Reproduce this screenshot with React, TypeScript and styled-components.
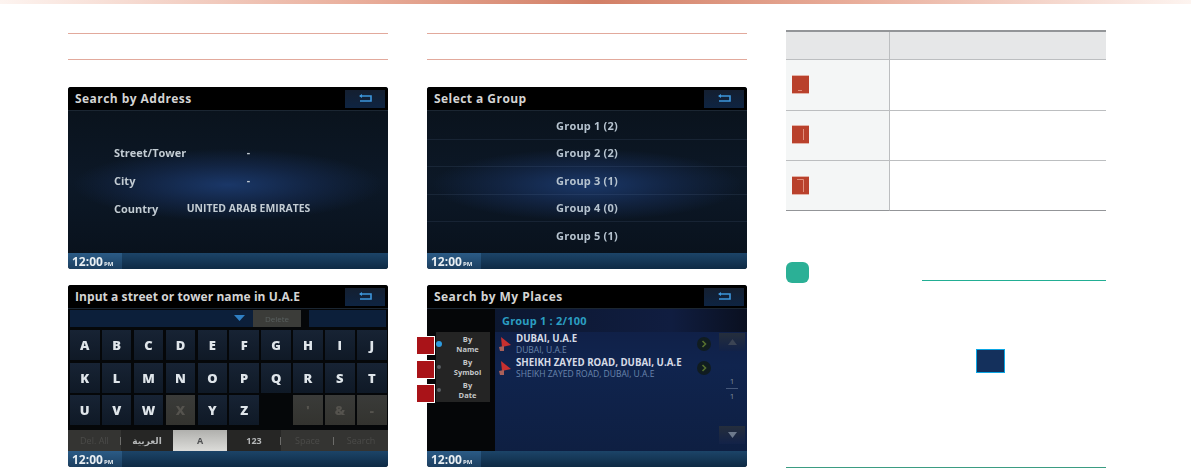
import React from 'react';
import styled, { createGlobalStyle } from 'styled-components';

const GlobalStyle = createGlobalStyle`
  html, body {
    margin: 0;
    padding: 0;
    background: #fff;
    overflow: hidden;
  }
  body {
    font-family: "Open Sans", "Liberation Sans", "DejaVu Sans", sans-serif;
  }
`;

const Page = styled.div`
  width: 1191px;
  height: 468px;
  overflow: hidden;
  background: #fff;
`;

const TopBand = styled.div`
  height: 4px;
  background: linear-gradient(90deg, #fdf4f0 0%, #e9ae9b 30%, #d27f66 50%, #e9ae9b 72%, #fdf4f0 100%);
`;

const Columns = styled.div`
  display: grid;
  grid-template-columns: 320px 320px 320px;
  column-gap: 39px;
  padding: 26px 0 0 68px;
`;

const Column = styled.section`
  display: flex;
  flex-direction: column;
`;

const HeadingBand = styled.div`
  height: 25px;
  margin-top: 3px;
  border-top: 1px solid #e2a99c;
  border-bottom: 1px solid #e2a99c;
`;

const ScreenStack = styled.div`
  position: relative;
  display: flex;
  flex-direction: column;
  gap: 16px;
  margin-top: 27px;
`;

const Screen = styled.div`
  height: 182px;
  border-radius: 3px;
  overflow: hidden;
  display: flex;
  flex-direction: column;
  background: #0a1320;
  color: #d4d8dc;
`;

const ScreenContent = styled.div`
  display: flex;
  flex-direction: column;
  flex: 1;
  min-height: 0;
  filter: blur(0.5px);
`;

const TitleBar = styled.div`
  height: 23px;
  flex: none;
  display: flex;
  align-items: center;
  justify-content: space-between;
  padding: 0 3px 0 7px;
  background: #000;
  border-bottom: 1px solid #1b2632;
`;

const Title = styled.span<{ $tracking: number }>`
  font-size: 12px;
  font-weight: 700;
  letter-spacing: ${p => p.$tracking}px;
  color: #d4d4d4;
`;

const BackButton = styled.div`
  width: 40px;
  height: 18px;
  background: linear-gradient(180deg, #141f30, #0e2442);
  display: flex;
  align-items: center;
  justify-content: center;
`;

const StatusBar = styled.div`
  height: 16px;
  flex: none;
  background: linear-gradient(180deg, #1c4468, #0e2a44);
  display: flex;
  align-items: stretch;
`;

const Clock = styled.div`
  width: 54px;
  display: flex;
  align-items: baseline;
  padding: 0 0 0 4px;
  box-sizing: border-box;
  background: linear-gradient(180deg, #2b5b86, #1c3f60);
  font-size: 12px;
  font-weight: 700;
  color: #e8eef2;

  small {
    font-size: 6px;
    margin-left: 1px;
  }
`;

const GlowBody = styled.div`
  flex: 1;
  min-height: 0;
  background:
    radial-gradient(ellipse 155px 36px at 50% 52%, #1a3768 0%, rgba(22, 44, 84, 0.6) 55%, rgba(10, 22, 38, 0) 100%),
    linear-gradient(180deg, #0a131d 0%, #0c1827 50%, #09121d 100%);
`;

const AddressBody = styled(GlowBody)`
  display: grid;
  grid-template-columns: 72px 125px;
  grid-auto-rows: 28px;
  padding: 27px 0 0 46px;
  align-items: center;
  font-size: 11px;
  font-weight: 700;
  color: #c3ccd3;
`;

const AddressValue = styled.span`
  text-align: center;
  font-size: 10.4px;
  white-space: nowrap;
`;

const GroupBody = styled(GlowBody)`
  display: flex;
  flex-direction: column;
  padding-top: 1px;
`;

const GroupRow = styled.div`
  height: 27.5px;
  display: flex;
  align-items: center;
  justify-content: center;
  font-size: 11px;
  font-weight: 700;
  letter-spacing: 0.2px;
  color: #b6c3cf;
  border-bottom: 1px solid rgba(120, 150, 190, 0.12);
  box-sizing: border-box;
  &:last-child {
    border-bottom: 0;
  }
`;

const KeyboardBody = styled.div`
  flex: 1;
  min-height: 0;
  display: flex;
  flex-direction: column;
  background: #050709;
`;

const InputRow = styled.div`
  height: 17px;
  margin: 1px 2px 0;
  display: flex;
  align-items: stretch;
`;

const InputField = styled.div`
  width: 183px;
  background: #0c1f3a;
  display: flex;
  align-items: center;
  justify-content: flex-end;
  padding-right: 8px;
  box-sizing: border-box;
`;

const DeleteKey = styled.div`
  width: 48px;
  background: #3b3c39;
  color: #59605f;
  font-size: 8px;
  display: flex;
  align-items: center;
  justify-content: center;
`;

const InputTail = styled.div`
  flex: 1;
  margin-left: 8px;
  background: #0c1f3a;
`;

const KeyGrid = styled.div`
  display: grid;
  grid-template-columns: repeat(10, 29.5px);
  grid-auto-rows: 30px;
  column-gap: 2.4px;
  row-gap: 2.6px;
  margin: 3px 0 0 2px;
`;

const Key = styled.div<{ $state?: 'on' | 'off' | 'blank' }>`
  display: flex;
  align-items: center;
  justify-content: center;
  font-size: 13px;
  font-weight: 800;
  color: ${p => (p.$state === 'off' ? '#55534e' : '#dfe5ea')};
  background: ${p =>
    p.$state === 'off'
      ? 'linear-gradient(180deg, #3a3b39, #33332f)'
      : p.$state === 'blank'
        ? 'transparent'
        : 'linear-gradient(180deg, #172334, #0f1926)'};
`;

const ModeBar = styled.div`
  height: 21px;
  margin-top: 5px;
  display: grid;
  grid-template-columns: 53px 52px 54px 54px 53px 1fr;
`;

const ModeTab = styled.div<{ $on?: boolean; $dim?: boolean; $rule?: boolean }>`
  position: relative;
  display: flex;
  align-items: center;
  justify-content: center;
  font-size: 9px;
  font-weight: ${p => (p.$dim ? 400 : 700)};
  color: ${p => (p.$on ? '#4f5052' : p.$dim ? '#4b4b49' : '#b5b7b8')};
  background: ${p =>
    p.$on ? 'linear-gradient(180deg, #b0b0ad, #dcdcd9)' : p.$dim ? '#343432' : '#262625'};
  white-space: nowrap;

  &::after {
    content: '';
    display: ${p => (p.$rule ? 'block' : 'none')};
    position: absolute;
    right: 0;
    top: 7px;
    height: 8px;
    width: 1px;
    background: #6c6c6a;
  }
`;

const PlacesBody = styled.div`
  flex: 1;
  min-height: 0;
  display: grid;
  grid-template-columns: 68px 1fr;
  background: #050608;
`;

const SortColumn = styled.div`
  padding-top: 23px;
`;

const SortList = styled.div`
  margin-left: 9px;
  width: 54px;
  height: 70px;
  display: flex;
  flex-direction: column;
  background: #242424;
`;

const SortItem = styled.div`
  flex: 1;
  display: flex;
  align-items: center;
  gap: 3px;
  padding-left: 0;
`;

const Dot = styled.span<{ $on?: boolean }>`
  flex: none;
  width: 6px;
  height: 6px;
  display: flex;
  align-items: center;
  justify-content: center;
  border-radius: 50%;
  background: ${p => (p.$on ? '#2d9be0' : 'transparent')};

  &::before {
    content: '';
    width: 4px;
    height: 4px;
    border-radius: 50%;
    background: ${p => (p.$on ? '#2d9be0' : '#5a5f63')};
  }
`;

const SortLabel = styled.span`
  flex: 1;
  text-align: center;
  font-size: 7.5px;
  font-weight: 700;
  line-height: 10px;
  color: #c4c7c9;
`;

const PlacesPanel = styled.div`
  display: flex;
  flex-direction: column;
  background: linear-gradient(180deg, #101e44 0%, #10244e 40%, #0e1f42 100%);
`;

const GroupCaption = styled.div`
  height: 23px;
  flex: none;
  display: flex;
  align-items: center;
  padding-left: 7px;
  font-size: 11px;
  font-weight: 700;
  letter-spacing: 0.2px;
  color: #2b9ec2;
  background: linear-gradient(90deg, #0c1730, #101d40 70%, #0a1020);
`;

const PlacesMain = styled.div`
  flex: 1;
  min-height: 0;
  display: grid;
  grid-template-columns: 1fr 28px;
`;

const PlaceList = styled.div`
  display: flex;
  flex-direction: column;
`;

const PlaceRow = styled.div`
  height: 24px;
  display: grid;
  grid-template-columns: 17px 1fr 22px;
  align-items: center;
  padding-left: 4px;
`;

const PlaceName = styled.div`
  font-size: 9.7px;
  font-weight: 700;
  line-height: 11px;
  color: #d6dbe6;
  white-space: nowrap;
`;

const PlaceSub = styled.div`
  font-size: 8.5px;
  line-height: 11px;
  color: #6a86ad;
  white-space: nowrap;
`;

const GoButton = styled.span`
  width: 14px;
  height: 14px;
  border-radius: 50%;
  background: #101c20;
  display: flex;
  align-items: center;
  justify-content: center;
`;

const ScrollColumn = styled.div`
  display: flex;
  flex-direction: column;
  align-items: center;
  justify-content: space-between;
  padding: 1px 2px 7px 0;
`;

const ScrollKey = styled.div`
  width: 26px;
  height: 18px;
  display: flex;
  align-items: center;
  justify-content: center;
  background: linear-gradient(180deg, #252e3c, #122248);
`;

const PageCount = styled.div`
  width: 12px;
  font-size: 8px;
  line-height: 14px;
  text-align: center;
  color: #7f8a9a;

  span {
    display: block;
  }
  span + span {
    border-top: 1px solid #46587a;
  }
`;

const Callouts = styled.div`
  position: absolute;
  left: -11px;
  top: 249px;
  display: flex;
  flex-direction: column;
  gap: 5px;
`;

const Callout = styled.span`
  width: 17px;
  height: 17px;
  box-sizing: content-box;
  border: 1px solid #fff;
  background: #a91318;
`;

const InfoTable = styled.div`
  display: grid;
  grid-template-columns: 104px 1fr;
  grid-template-rows: 28px 51px 50px 50px;
  border-top: 2px solid #939598;
`;

const HeadCell = styled.div`
  background: #e6e7e8;
  border-bottom: 1px solid #bcbec0;
  &:first-child {
    border-right: 1px solid #bcbec0;
  }
`;

const KeyCell = styled.div<{ $top: number; $last?: boolean }>`
  background: #f4f6f6;
  border-bottom: 1px solid ${p => (p.$last ? '#939598' : '#bcbec0')};
  border-right: 1px solid #bcbec0;
  padding: ${p => p.$top}px 0 0 6px;
  box-sizing: border-box;
`;

const ValueCell = styled.div<{ $last?: boolean }>`
  border-bottom: 1px solid ${p => (p.$last ? '#939598' : '#bcbec0')};
`;

const StepMark = styled.span`
  display: block;
  width: 17px;
  height: 19px;
  background: #b9412c;
  border-top: 1px solid #e3b3a8;
  border-bottom: 1px solid #e3b3a8;
  box-sizing: border-box;
`;

const NoteHead = styled.div`
  display: flex;
  align-items: flex-end;
  margin-top: 51px;
`;

const NoteBadge = styled.span`
  width: 23px;
  height: 21px;
  border-radius: 6px;
  background: #2bb096;
`;

const NoteRule = styled.span`
  height: 1px;
  width: 184px;
  margin-left: auto;
  margin-bottom: 2px;
  background: #22ae94;
`;

const NoteBody = styled.div`
  height: 185px;
  padding: 66px 0 0 190px;
  box-sizing: border-box;
  border-bottom: 1px solid #3b9c82;
`;

const SwatchKey = styled.span`
  display: block;
  width: 29px;
  height: 24px;
  box-sizing: border-box;
  background: #14305c;
  border: 1px solid #0ba6e4;
`;

const BackIcon = () => (
  <svg width="16" height="9" viewBox="0 0 16 9" fill="none">
    <path d="M3 2 H14 V7 H3" stroke="#3d97dc" strokeWidth="1.6" />
    <path d="M5 0 L2 2 L5 4" fill="#3d97dc" />
  </svg>
);

const ScreenFrame: React.FC<{ title: string; tracking?: number; children: React.ReactNode }> = ({
  title,
  tracking = 0.45,
  children,
}) => (
  <Screen>
    <ScreenContent>
      <TitleBar>
        <Title $tracking={tracking}>{title}</Title>
        <BackButton>
          <BackIcon />
        </BackButton>
      </TitleBar>
      {children}
      <StatusBar>
        <Clock>
          12:00<small>PM</small>
        </Clock>
      </StatusBar>
    </ScreenContent>
  </Screen>
);

const Flag = () => (
  <svg width="13" height="15" viewBox="0 0 13 15">
    <path d="M2 0 L12 8 L3 10 Z" fill="#c8302f" />
    <path d="M0 10 L5 9 L5 14 L1 14 Z" fill="#a8605a" />
  </svg>
);

const Chevron = () => (
  <svg width="8" height="8" viewBox="0 0 8 8" fill="none">
    <path d="M2.5 1 L5.5 4 L2.5 7" stroke="#56702f" strokeWidth="1.6" />
  </svg>
);

const ScrollArrow: React.FC<{ down?: boolean }> = ({ down }) => (
  <svg width="9" height="6" viewBox="0 0 9 6">
    <path d={down ? 'M0 0 H9 L4.5 6 Z' : 'M0 6 H9 L4.5 0 Z'} fill={down ? '#6d7a8c' : '#3b4454'} />
  </svg>
);

const MarkStroke: React.FC<{ d: string }> = ({ d }) => (
  <svg width="17" height="17" viewBox="0 0 17 17" fill="none" style={{ display: 'block' }}>
    <path d={d} stroke="#e08e7c" strokeWidth="1" />
  </svg>
);

type KeyDef = { label: string; state?: 'off' | 'blank' };

const keyRows: KeyDef[] = [
  ...'ABCDEFGHIJKLMNOPQRST'.split('').map(label => ({ label })),
  { label: 'U' },
  { label: 'V' },
  { label: 'W' },
  { label: 'X', state: 'off' },
  { label: 'Y' },
  { label: 'Z' },
  { label: '', state: 'blank' },
  { label: "'", state: 'off' },
  { label: '&', state: 'off' },
  { label: '-', state: 'off' },
];

const places = [
  { name: 'DUBAI, U.A.E', sub: 'DUBAI, U.A.E' },
  { name: 'SHEIKH ZAYED ROAD, DUBAI, U.A.E', sub: 'SHEIKH ZAYED ROAD, DUBAI, U.A.E' },
];

export default function App() {
  return (
    <Page>
      <GlobalStyle />
      <TopBand />
      <Columns>
        <Column>
          <HeadingBand />
          <ScreenStack>
            <ScreenFrame title="Search by Address">
              <AddressBody>
                <span>Street/Tower</span>
                <AddressValue>-</AddressValue>
                <span>City</span>
                <AddressValue>-</AddressValue>
                <span>Country</span>
                <AddressValue>UNITED ARAB EMIRATES</AddressValue>
              </AddressBody>
            </ScreenFrame>
            <ScreenFrame title="Input a street or tower name in U.A.E" tracking={0.07}>
              <KeyboardBody>
                <InputRow>
                  <InputField>
                    <svg width="11" height="6" viewBox="0 0 11 6">
                      <path d="M0 0 H11 L5.5 6 Z" fill="#2f7fc4" />
                    </svg>
                  </InputField>
                  <DeleteKey>Delete</DeleteKey>
                  <InputTail />
                </InputRow>
                <KeyGrid>
                  {keyRows.map((k, i) => (
                    <Key key={i} $state={k.state}>
                      {k.label}
                    </Key>
                  ))}
                </KeyGrid>
                <ModeBar>
                  <ModeTab $dim $rule>Del. All</ModeTab>
                  <ModeTab>العربية</ModeTab>
                  <ModeTab $on>A</ModeTab>
                  <ModeTab $rule>123</ModeTab>
                  <ModeTab $dim $rule>Space</ModeTab>
                  <ModeTab $dim>Search</ModeTab>
                </ModeBar>
              </KeyboardBody>
            </ScreenFrame>
          </ScreenStack>
        </Column>

        <Column>
          <HeadingBand />
          <ScreenStack>
            <ScreenFrame title="Select a Group">
              <GroupBody>
                <GroupRow>Group 1 (2)</GroupRow>
                <GroupRow>Group 2 (2)</GroupRow>
                <GroupRow>Group 3 (1)</GroupRow>
                <GroupRow>Group 4 (0)</GroupRow>
                <GroupRow>Group 5 (1)</GroupRow>
              </GroupBody>
            </ScreenFrame>
            <ScreenFrame title="Search by My Places">
              <PlacesBody>
                <SortColumn>
                  <SortList>
                    <SortItem>
                      <Dot $on />
                      <SortLabel>By<br />Name</SortLabel>
                    </SortItem>
                    <SortItem>
                      <Dot />
                      <SortLabel>By<br />Symbol</SortLabel>
                    </SortItem>
                    <SortItem>
                      <Dot />
                      <SortLabel>By<br />Date</SortLabel>
                    </SortItem>
                  </SortList>
                </SortColumn>
                <PlacesPanel>
                  <GroupCaption>Group 1 : 2/100</GroupCaption>
                  <PlacesMain>
                    <PlaceList>
                      {places.map(p => (
                        <PlaceRow key={p.name}>
                          <Flag />
                          <div>
                            <PlaceName>{p.name}</PlaceName>
                            <PlaceSub>{p.sub}</PlaceSub>
                          </div>
                          <GoButton>
                            <Chevron />
                          </GoButton>
                        </PlaceRow>
                      ))}
                    </PlaceList>
                    <ScrollColumn>
                      <ScrollKey>
                        <ScrollArrow />
                      </ScrollKey>
                      <PageCount>
                        <span>1</span>
                        <span>1</span>
                      </PageCount>
                      <ScrollKey>
                        <ScrollArrow down />
                      </ScrollKey>
                    </ScrollColumn>
                  </PlacesMain>
                </PlacesPanel>
              </PlacesBody>
            </ScreenFrame>
            <Callouts>
              <Callout />
              <Callout />
              <Callout />
            </Callouts>
          </ScreenStack>
        </Column>

        <Column>
          <InfoTable>
            <HeadCell />
            <HeadCell />
            <KeyCell $top={15}>
              <StepMark>
                <MarkStroke d="M6 14.5 H10" />
              </StepMark>
            </KeyCell>
            <ValueCell />
            <KeyCell $top={14}>
              <StepMark>
                <MarkStroke d="M11.5 3 V14" />
              </StepMark>
            </KeyCell>
            <ValueCell />
            <KeyCell $top={15} $last>
              <StepMark>
                <MarkStroke d="M5 2.5 H11.5 V15" />
              </StepMark>
            </KeyCell>
            <ValueCell $last />
          </InfoTable>
          <NoteHead>
            <NoteBadge />
            <NoteRule />
          </NoteHead>
          <NoteBody>
            <SwatchKey />
          </NoteBody>
        </Column>
      </Columns>
    </Page>
  );
}
